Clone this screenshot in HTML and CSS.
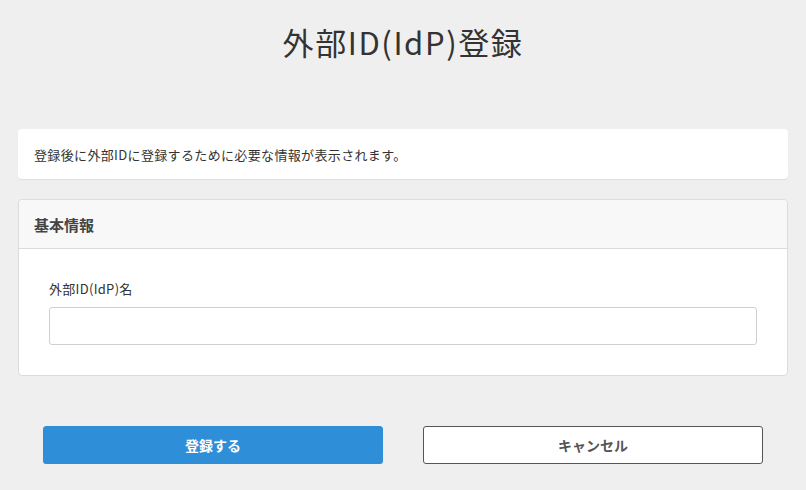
FILE: index.html
```html
<!DOCTYPE html>
<html lang="ja">
<head>
<meta charset="utf-8">
<link rel="stylesheet" href="styles.css">
</head>
<body>
<div class="page">
  <h1 class="title">外部ID(IdP)登録</h1>
  <div class="notice">登録後に外部IDに登録するために必要な情報が表示されます。</div>
  <section class="card">
    <div class="card-header">基本情報</div>
    <div class="card-body">
      <label class="field-label" for="idp">外部ID(IdP)名</label>
      <input class="field-input" id="idp" type="text">
    </div>
  </section>
  <div class="actions">
    <button class="btn btn-primary">登録する</button>
    <button class="btn btn-secondary">キャンセル</button>
  </div>
</div>
</body>
</html>
```

FILE: styles.css
```css
html, body {
  margin: 0;
  padding: 0;
  background: #efefef;
}
body {
  font-family: "Noto Sans CJK JP", "Noto Sans", sans-serif;
  color: #333;
}
.page {
  padding: 0 18px;
}
.title {
  margin: 0;
  padding-top: 20px;
  height: 44px;
  line-height: 44px;
  font-size: 31px;
  font-weight: 400;
  letter-spacing: 1.6px;
  text-align: center;
  color: #333;
  margin-bottom: 65px;
}
.notice {
  background: #fff;
  border-radius: 4px;
  height: 50px;
  line-height: 52px;
  padding: 0 16px;
  font-size: 13px;
  letter-spacing: 0.35px;
  color: #333;
  box-shadow: 0 1px 1px rgba(0, 0, 0, 0.07);
}
.card {
  margin-top: 20px;
  background: #fff;
  border: 1px solid #dcdcdc;
  border-radius: 4px;
}
.card-header {
  height: 48px;
  line-height: 50px;
  padding: 0 15px;
  background: #f8f8f8;
  border-bottom: 1px solid #dcdcdc;
  border-radius: 4px 4px 0 0;
  font-size: 15px;
  font-weight: 700;
  color: #444;
}
.card-body {
  padding: 30px 30px 30px;
  display: flex;
  flex-direction: column;
}
.field-label {
  height: 20px;
  line-height: 20px;
  font-size: 13px;
  letter-spacing: 0.3px;
  color: #333;
}
.field-input {
  margin-top: 8px;
  height: 38px;
  box-sizing: border-box;
  border: 1px solid #cfcfcf;
  border-radius: 3px;
  background: #fff;
  font: inherit;
  padding: 0 10px;
}
.actions {
  display: flex;
  gap: 40px;
  padding: 50px 25px 0;
}
.btn {
  flex: 1;
  height: 38px;
  border-radius: 3px;
  font-family: inherit;
  font-size: 14px;
  font-weight: 700;
  cursor: pointer;
}
.btn-primary {
  background: #2f8ed8;
  border: 1px solid #2f8ed8;
  color: #fff;
  box-shadow: 0 1px 1px rgba(0, 0, 0, 0.1);
}
.btn-secondary {
  background: #fff;
  border: 1px solid #555;
  color: #555;
}
```
